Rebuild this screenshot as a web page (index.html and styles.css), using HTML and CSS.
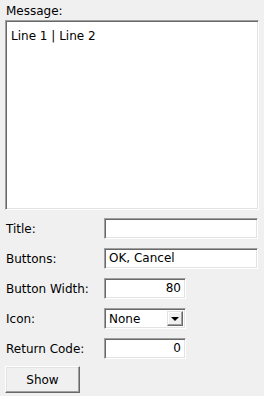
FILE: index.html
```html
<!DOCTYPE html>
<html lang="en">
<head>
  <meta charset="UTF-8" />
  <title>Message Box</title>
  <link rel="stylesheet" href="styles.css">
</head>
<body>

  <!-- Message text -->
  <div class="label msg-label">Message:</div>
  <div class="memo">Line 1 | Line 2</div>

  <!-- Options -->
  <div class="form">
    <div class="label">Title:</div>
    <div class="field wide"></div>

    <div class="label">Buttons:</div>
    <div class="field wide">OK, Cancel</div>

    <div class="label">Button Width:</div>
    <div class="field short num">80</div>

    <div class="label">Icon:</div>
    <div class="combo">
      <span class="combo-text">None</span>
      <span class="combo-btn"><span class="arrow"></span></span>
    </div>

    <div class="label">Return Code:</div>
    <div class="field short num">0</div>
  </div>

  <button class="show-btn">Show</button>

</body>
</html>
```

FILE: styles.css
```css
body {
  font-family: 'DejaVu Sans', Tahoma, sans-serif;
  font-size: 12px;
  background-color: #f0f0f0;
  color: #000;
  margin: 0;
  padding: 4px 5px;
  width: 254px;
}

.label {
  line-height: 14px;
}

.msg-label {
  padding-left: 1px;
  margin-bottom: 2px;
}

/* sunken edit look */
.memo,
.field,
.combo {
  background: white;
  border-top: 1px solid #a0a0a0;
  border-left: 1px solid #a0a0a0;
  border-right: 1px solid #fff;
  border-bottom: 1px solid #fff;
  box-shadow: inset 1px 1px 0 #696969, inset -1px -1px 0 #e3e3e3;
  box-sizing: border-box;
}

.memo {
  height: 190px;
  padding: 8px 5px;
  white-space: pre;
}

.form {
  display: grid;
  grid-template-columns: 99px 1fr;
  grid-auto-rows: 21px;
  row-gap: 9px;
  align-items: center;
  margin-top: 8px;
}

.form .label {
  padding-left: 1px;
}

.field {
  height: 21px;
  line-height: 19px;
  padding: 0 4px;
}

.wide {
  width: 154px;
}

.short {
  width: 82px;
}

.num {
  text-align: right;
}

.combo {
  width: 82px;
  height: 21px;
  display: flex;
  align-items: stretch;
  padding: 2px;
}

.combo-text {
  flex: 1;
  line-height: 17px;
  padding-left: 2px;
}

.combo-btn {
  width: 16px;
  background: #f0f0f0;
  border-top: 1px solid #e3e3e3;
  border-left: 1px solid #e3e3e3;
  border-right: 1px solid #696969;
  border-bottom: 1px solid #696969;
  box-shadow: inset -1px -1px 0 #a0a0a0, inset 1px 1px 0 #fff;
  display: flex;
  align-items: center;
  justify-content: center;
  box-sizing: border-box;
}

.arrow {
  width: 0;
  height: 0;
  border-left: 4px solid transparent;
  border-right: 4px solid transparent;
  border-top: 4px solid #000;
}

.show-btn {
  font-family: inherit;
  font-size: 12px;
  color: #000;
  width: 75px;
  height: 27px;
  margin-top: 7px;
  background: #f0f0f0;
  border-top: 1px solid #fff;
  border-left: 1px solid #fff;
  border-right: 1px solid #696969;
  border-bottom: 1px solid #696969;
  box-shadow: inset -1px -1px 0 #a0a0a0, inset 1px 1px 0 #e3e3e3;
  padding: 0;
}
```
